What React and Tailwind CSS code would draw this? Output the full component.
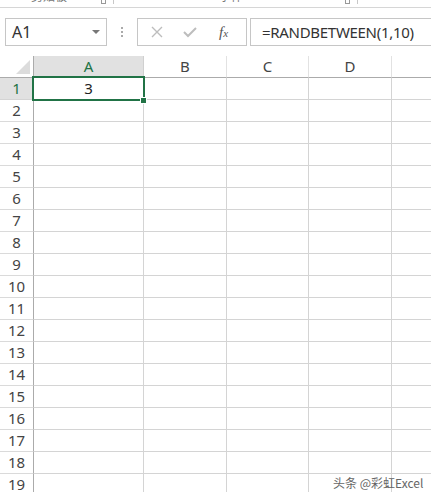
import React from "react";

const cols = ["A", "B", "C", "D", "E"];
const rows = Array.from({ length: 20 }, (_, i) => i + 1);

function CornerTriangle() {
  return (
    <svg width="34" height="21" viewBox="0 0 34 21" className="block">
      <polygon points="30,4 30,18 16,18" fill="#dcdcdc" />
    </svg>
  );
}

export default function App() {
  return (
    <div
      className="relative w-[431px] h-[492px] overflow-hidden bg-white text-[#333]"
      style={{ fontFamily: '"Noto Sans", "Noto Sans CJK SC", sans-serif' }}
    >
      {/* ribbon tail, mostly cut off */}
      <div className="h-[8px] border-b border-[#d6d6d6] overflow-hidden flex items-end pb-[3px] text-[12px] leading-[14px] text-[#777]">
        <span className="ml-[31px] w-[70px]">剪贴板</span>
        <span className="w-[12px] h-[14px] flex items-end">
          <span className="block w-[5px] h-[5px] border border-[#999]" />
        </span>
        <span className="block w-px h-[14px] bg-[#c8c8c8]" />
        <span className="ml-[105px] w-[126px]">字体</span>
        <span className="w-[12px] h-[14px] flex items-end">
          <span className="block w-[5px] h-[5px] border border-[#999]" />
        </span>
        <span className="block w-px h-[14px] bg-[#c8c8c8]" />
      </div>

      {/* name box + formula bar */}
      <div className="mt-[10px] h-[28px] flex">
        <div className="ml-[5px] w-[102px] h-full border border-[#c6c6c6] flex items-center pl-[6px] pr-[6px]">
          <span className="text-[16px] leading-none flex-1">A1</span>
          <svg width="8" height="5" viewBox="0 0 8 5">
            <polygon points="0,0 8,0 4,4" fill="#777" />
          </svg>
        </div>
        <div className="w-[30px] flex flex-col items-center justify-center gap-[2px]">
          <span className="block w-[2px] h-[2px] bg-[#aaa]" />
          <span className="block w-[2px] h-[2px] bg-[#aaa]" />
          <span className="block w-[2px] h-[2px] bg-[#aaa]" />
        </div>
        <div className="w-[110px] h-full border border-[#c6c6c6] flex items-center">
          <svg width="12" height="12" viewBox="0 0 12 12" className="ml-[13px]">
            <path d="M1 1 L11 11 M11 1 L1 11" stroke="#bdbdbd" strokeWidth="1.4" />
          </svg>
          <svg width="14" height="12" viewBox="0 0 14 12" className="ml-[20px]">
            <path d="M1 6 L5 10 L13 2" stroke="#bdbdbd" strokeWidth="2" fill="none" />
          </svg>
          <span
            className="ml-[22px] text-[15px] italic leading-none text-[#555]"
            style={{ fontFamily: '"Liberation Serif", serif' }}
          >
            f<span className="text-[11px]">x</span>
          </span>
        </div>
        <div className="ml-[3px] flex-1 h-full border border-r-0 border-[#c6c6c6] flex items-center pl-[11px]">
          <span className="text-[15px] leading-none tracking-[-0.3px]">=RANDBETWEEN(1,10)</span>
        </div>
      </div>

      {/* sheet grid */}
      <div className="relative mt-[10px]">
        <div className="grid grid-cols-[34px_110px_83px_82px_83px_90px] w-[482px] text-[15px] leading-none">
          {/* header row */}
          <div className="h-[22px] border-r border-b border-r-[#ababab] border-b-[#ababab]">
            <CornerTriangle />
          </div>
          {cols.map((c) => (
            <div
              key={c}
              className={
                c === "A"
                  ? "h-[22px] bg-[#e1e1e1] border-r border-b border-r-[#d0d0d0] border-b-[#ababab] flex items-center justify-center text-[#217346]"
                  : "h-[22px] border-r border-b border-r-[#e2e2e2] border-b-[#ababab] flex items-center justify-center text-[#444]"
              }
            >
              {c}
            </div>
          ))}

          {rows.map((r) => (
            <React.Fragment key={r}>
              <div
                className={
                  r === 1
                    ? "h-[22px] bg-[#e1e1e1] border-r border-b border-r-[#ababab] border-b-[#d4d4d4] flex items-center justify-center text-[#217346]"
                    : "h-[22px] border-r border-b border-r-[#ababab] border-b-[#dadada] flex items-center justify-center text-[#444]"
                }
              >
                {r}
              </div>
              {cols.map((c) => (
                <div
                  key={c}
                  className="h-[22px] border-r border-b border-[#d4d4d4] flex items-center justify-center text-[#222]"
                >
                  {r === 1 && c === "A" ? "3" : ""}
                </div>
              ))}
            </React.Fragment>
          ))}
        </div>

        {/* active cell selection */}
        <div className="absolute left-[32px] top-[20px] w-[113px] h-[25px] border-2 border-[#217346]" />
        <div className="absolute left-[140px] top-[41px] w-[7px] h-[7px] bg-[#217346] border border-white" />
      </div>

      {/* watermark */}
      <div
        className="absolute left-[333px] top-[476px] text-[12px] leading-[14px] text-[#666]"
        style={{ fontFamily: '"Noto Sans CJK SC", "Noto Sans", sans-serif' }}
      >
        头条 @彩虹Excel
      </div>
    </div>
  );
}
